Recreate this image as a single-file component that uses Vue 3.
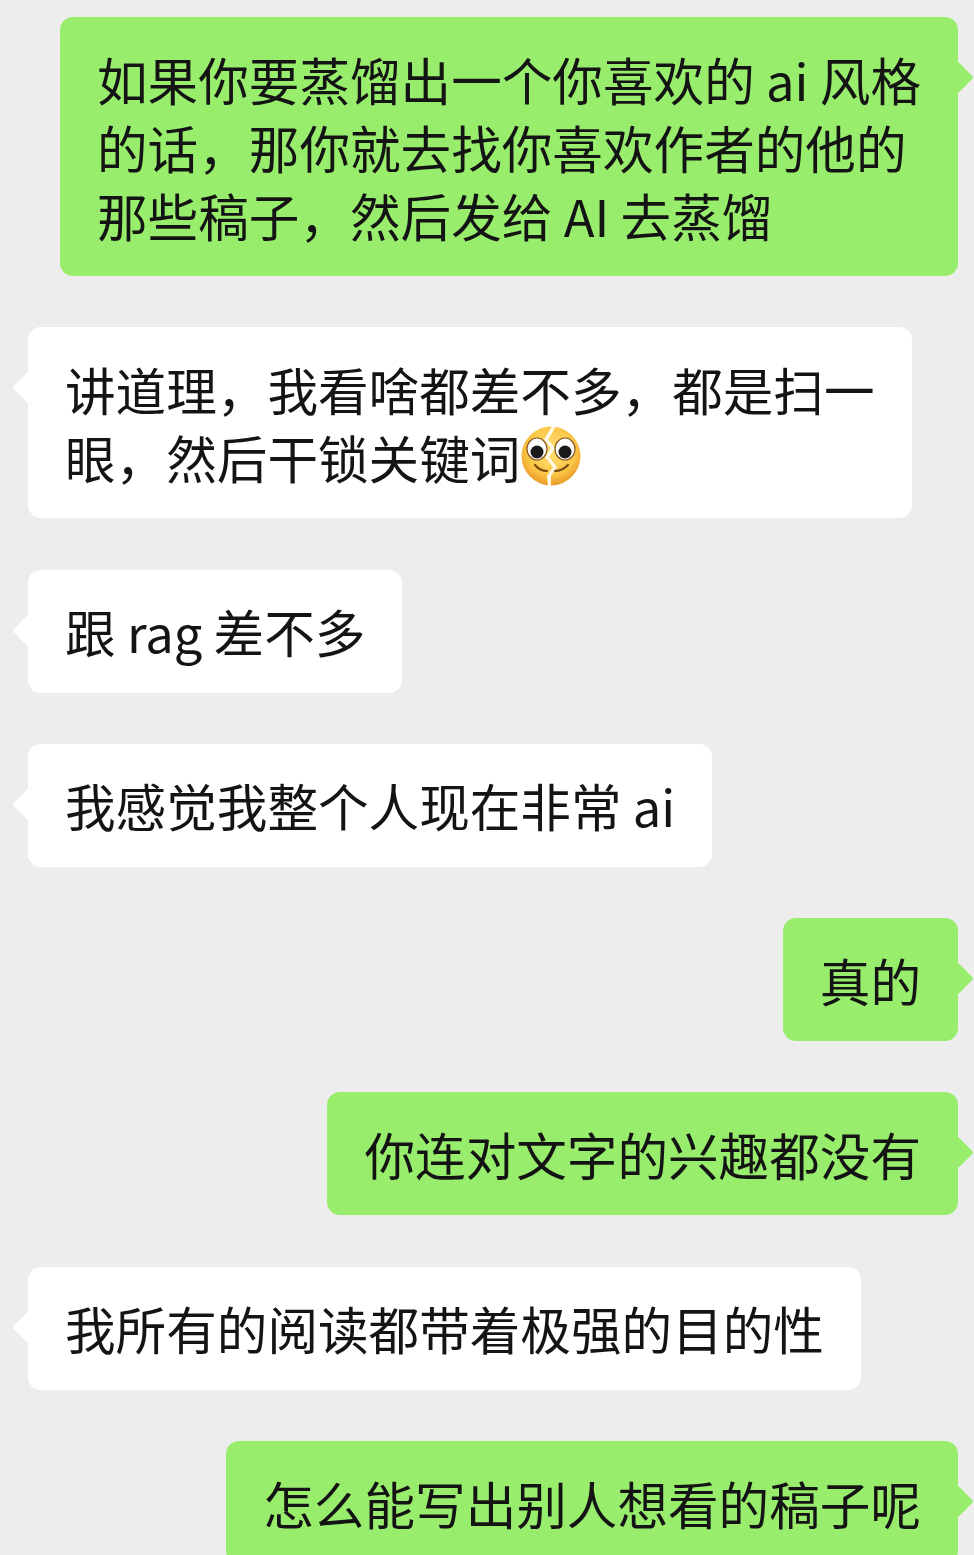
<script setup>
const msgs = [
  { me: true, lines: ['如果你要蒸馏出一个你喜欢的 ai 风格', '的话，那你就去找你喜欢作者的他的', '那些稿子，然后发给 AI 去蒸馏'] },
  { me: false, lines: ['讲道理，我看啥都差不多，都是扫一', '眼，然后干锁关键词'], emoji: true },
  { me: false, lines: ['跟 rag 差不多'] },
  { me: false, lines: ['我感觉我整个人现在非常 ai'] },
  { me: true, lines: ['真的'] },
  { me: true, lines: ['你连对文字的兴趣都没有'] },
  { me: false, lines: ['我所有的阅读都带着极强的目的性'] },
  { me: true, lines: ['怎么能写出别人想看的稿子呢'] },
]
</script>

<template>
  <main class="chat">
    <div v-for="(m, i) in msgs" :key="i" class="bubble" :class="m.me ? 'me' : 'them'">
      <div v-for="(l, j) in m.lines" :key="j" class="line">
        {{ l }}<svg v-if="m.emoji && j === m.lines.length - 1" class="emoji" viewBox="0 0 62 62" aria-hidden="true">
          <defs>
            <radialGradient id="face" cx="50%" cy="40%" r="60%">
              <stop offset="0%" stop-color="#ffe27a" />
              <stop offset="70%" stop-color="#fbc545" />
              <stop offset="100%" stop-color="#eb9a2a" />
            </radialGradient>
          </defs>
          <circle cx="31" cy="30" r="29.5" fill="url(#face)" />
          <path d="M32 0 L24 14 L31 22 L25 31 L33 41 L27 50 L28 60 L31 60 L31 50 L37 41 L29 31 L35 22 L28 14 L36 0 Z" fill="#fff8e8" />
          <ellipse cx="17" cy="23" rx="10" ry="11" fill="#fff" stroke="#8a5a20" stroke-width="1.2" />
          <ellipse cx="45" cy="23" rx="10" ry="11" fill="#fff" stroke="#8a5a20" stroke-width="1.2" />
          <circle cx="17" cy="26" r="6.5" fill="#1a1a1a" />
          <circle cx="45" cy="26" r="6.5" fill="#1a1a1a" />
          <path d="M15 39 Q20 45 27 45" fill="none" stroke="#7a4a12" stroke-width="2.2" stroke-linecap="round" />
          <path d="M35 45 Q42 45 48 39" fill="none" stroke="#7a4a12" stroke-width="2.2" stroke-linecap="round" />
        </svg>
      </div>
    </div>
  </main>
</template>

<style>
html, body { background: #ededed; }
</style>

<style scoped>
.chat {
  width: 974px;
  height: 1555px;
  box-sizing: border-box;
  padding: 17px 16px 0 28px;
  overflow: hidden;
  display: flex;
  flex-direction: column;
  gap: 51.3px;
  background: #ededed;
  font-family: "Noto Sans CJK SC", "Noto Sans", sans-serif;
  font-size: 50.6px;
  line-height: 68px;
  color: #141414;
}
.bubble {
  position: relative;
  flex: none;
  box-sizing: border-box;
  padding: 27.5px 37px;
  border-radius: 13px;
}
.line {
  display: flex;
  align-items: center;
  white-space: pre;
  height: 68px;
}
.me { align-self: flex-end; background: #98ee6c; }
.them { align-self: flex-start; background: #fff; }
.bubble::before {
  content: "";
  position: absolute;
  top: 49px;
  width: 23px;
  height: 23px;
  transform: rotate(45deg);
  border-radius: 3px;
  background: inherit;
}
.me::before { right: -11px; }
.them::before { left: -11px; }
.emoji { width: 62px; height: 62px; flex: none; }
</style>
